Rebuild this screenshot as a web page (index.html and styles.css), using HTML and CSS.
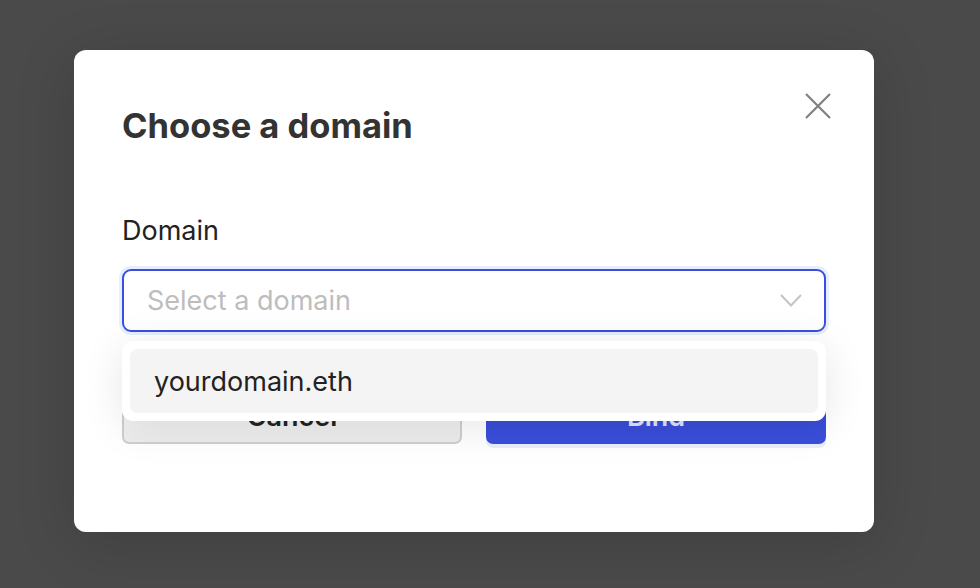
FILE: index.html
```html
<!DOCTYPE html>
<html lang="en">
<head>
<meta charset="utf-8">
<title>Choose a domain</title>
<link rel="stylesheet" href="styles.css">
</head>
<body>
<div class="modal">
  <button class="close" aria-label="Close">
    <svg width="26" height="26" viewBox="0 0 26 26"><path d="M1 1L25 25M25 1L1 25" stroke="#808080" stroke-width="2.2" fill="none"/></svg>
  </button>
  <h1 class="title">Choose a domain</h1>
  <div class="label">Domain</div>
  <div class="field">
    <div class="select">
      <span class="placeholder">Select a domain</span>
      <svg class="chev" width="22" height="13" viewBox="0 0 22 13"><path d="M1 1L11 11.5L21 1" stroke="#c4c4c4" stroke-width="2" fill="none"/></svg>
    </div>
    <div class="menu">
      <div class="option">yourdomain.eth</div>
    </div>
  </div>
  <div class="actions">
    <button class="btn cancel">Cancel</button>
    <button class="btn bind">Bind</button>
  </div>
</div>
</body>
</html>
```

FILE: styles.css
```css
html, body {
  margin: 0;
  height: 100%;
}
body {
  background: #4a4a4a;
  font-family: Inter, "Noto Sans", sans-serif;
  overflow: hidden;
}
.modal {
  position: relative;
  box-sizing: border-box;
  margin: 50px 0 0 74px;
  width: 800px;
  height: 482px;
  background: #fff;
  border-radius: 12px;
  padding: 48px 48px 0 48px;
  box-shadow: 0 10px 60px rgba(0,0,0,0.15);
}
.close {
  position: absolute;
  right: 43px;
  top: 43px;
  border: 0;
  background: none;
  padding: 0;
  width: 26px;
  height: 26px;
  display: flex;
}
.title {
  margin: 0;
  font-size: 34.5px;
  font-weight: 650;
  color: #333;
  line-height: 56px;
  letter-spacing: 0;
}
.label {
  margin-top: 62px;
  font-size: 27px;
  color: #222;
  line-height: 30px;
}
.field {
  position: relative;
  margin-top: 23px;
}
.select {
  box-sizing: border-box;
  height: 63px;
  border: 2px solid #3a4fe0;
  border-radius: 9px;
  box-shadow: 0 0 0 3px #e7eefc;
  display: flex;
  align-items: center;
  justify-content: space-between;
  padding: 0 22px 0 23px;
  background: #fff;
}
.placeholder {
  font-size: 27px;
  color: #bdbdbd;
}
.chev {
  display: block;
}
.menu {
  position: absolute;
  left: 0;
  right: 0;
  top: 72px;
  background: #fff;
  border-radius: 11px;
  padding: 8px;
  box-shadow: 0 6px 40px rgba(0,0,0,0.10);
  z-index: 2;
}
.option {
  height: 64px;
  display: flex;
  align-items: center;
  padding-left: 24px;
  background: #f4f4f4;
  border-radius: 7px;
  font-size: 27px;
  color: #222;
}
.actions {
  display: flex;
  justify-content: space-between;
  margin-top: 56px;
}
.btn {
  flex: none;
  width: 340px;
  box-sizing: border-box;
  height: 56px;
  border-radius: 7px;
  font-family: Inter, "Noto Sans", sans-serif;
  font-size: 27px;
  font-weight: 600;
}
.cancel {
  background: linear-gradient(#f8f8f8, #ececec);
  border: 2px solid #cfcfcf;
  color: #222;
}
.bind {
  background: linear-gradient(#3848d0, #3a4fdc);
  border: 0;
  color: #dfe3ff;
  box-shadow: 0 4px 0 #e8eefb;
}
```
